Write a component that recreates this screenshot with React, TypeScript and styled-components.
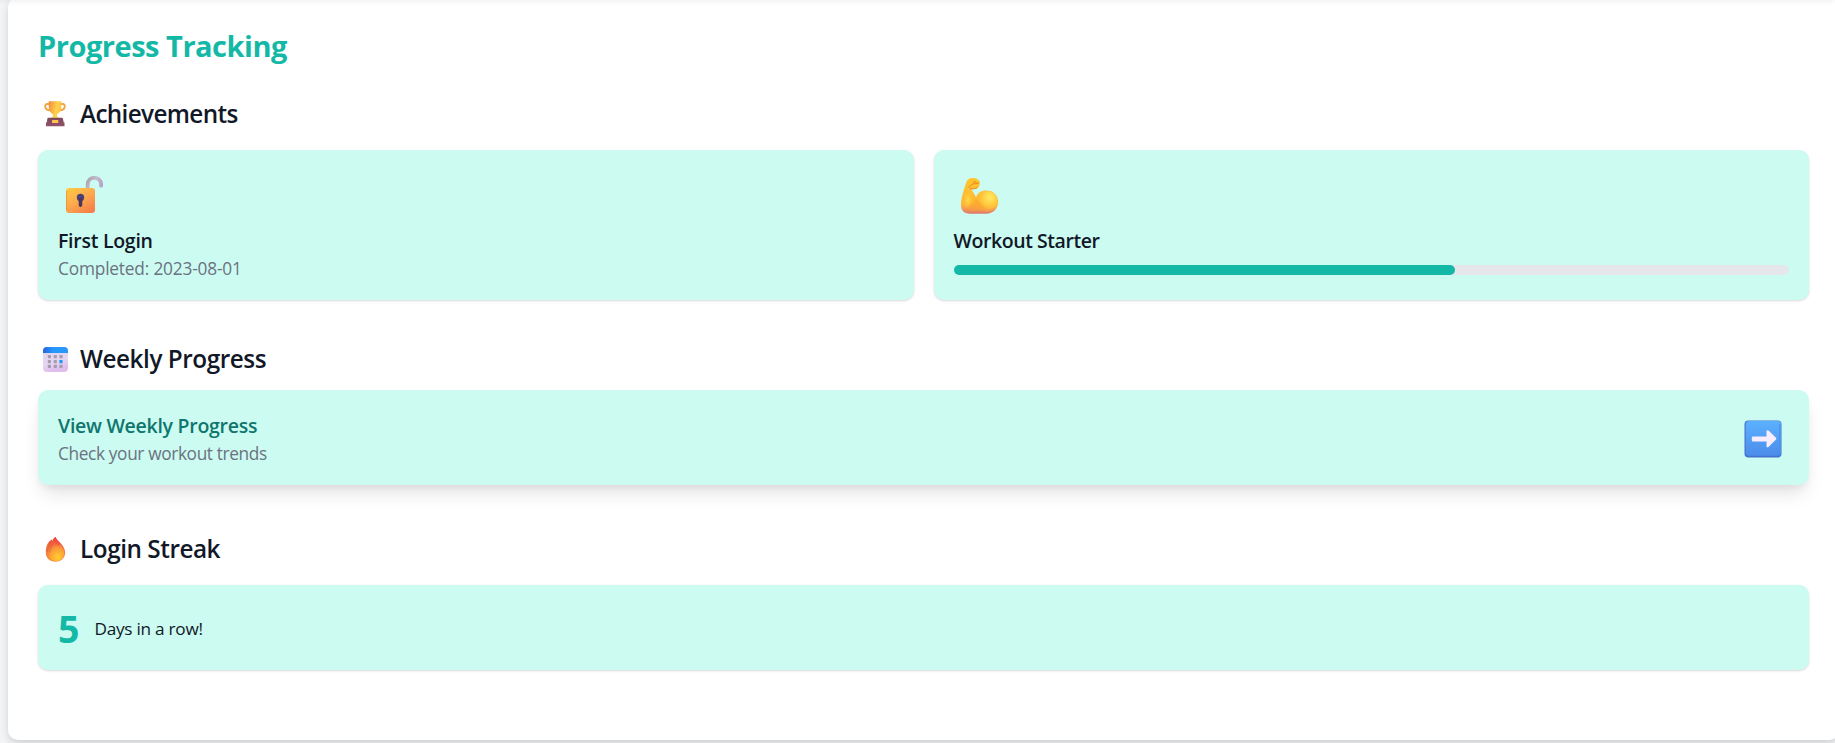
import React from 'react';
import styled, { createGlobalStyle } from 'styled-components';

const GlobalStyle = createGlobalStyle`
  * { box-sizing: border-box; }
  body {
    margin: 0;
    background: #f3f4f6;
    color: #111827;
    font-family: 'Segoe UI', 'Open Sans', 'Noto Sans', sans-serif;
    overflow: hidden;
  }
  h1, h2, h3, p { margin: 0; white-space: nowrap; }
`;

const Page = styled.div`
  height: 743px;
  padding-left: 8px;
  overflow: hidden;
  position: relative;
`;

const HeaderShadow = styled.div`
  position: absolute;
  left: 0;
  right: 0;
  top: -10px;
  height: 10px;
  box-shadow: 0 1px 6px rgba(0, 0, 0, 0.07);
`;

const Panel = styled.main`
  width: 1831px;
  height: 743px;
  margin-top: -3px;
  padding: 29px 30px 0;
  background: #fff;
  border-radius: 10px;
  box-shadow: 0 5px 8px -1px rgba(0, 0, 0, 0.1), 0 2px 10px rgba(0, 0, 0, 0.06);
`;

const Title = styled.h1`
  height: 40px;
  margin-bottom: 30px;
  font-size: 29px;
  line-height: 40px;
  font-weight: 700;
  letter-spacing: -0.48px;
  color: #14b8a6;
`;

const Section = styled.section<{ $after: number }>`
  margin-bottom: ${(p) => p.$after}px;
`;

const SectionHeading = styled.h2<{ $gap?: number; $track?: number }>`
  display: flex;
  align-items: center;
  gap: 10px;
  height: 34px;
  margin-bottom: ${(p) => p.$gap ?? 20}px;
  padding: 2px 0 0 1px;
  font-size: 24.3px;
  line-height: 34px;
  font-weight: 600;
  letter-spacing: ${(p) => p.$track ?? -0.45}px;

  svg { margin-top: -2px; }
`;

const Grid = styled.div`
  display: grid;
  grid-template-columns: 1fr 1fr;
  gap: 20px;
`;

const Card = styled.div`
  padding: 20px;
  background: #ccfbf1;
  border-radius: 10px;
  box-shadow: 0 1px 3px rgba(0, 0, 0, 0.1), 0 1px 2px rgba(0, 0, 0, 0.06);
`;

const AchievementCard = styled(Card)`
  height: 150px;
`;

const LinkCard = styled(Card)`
  display: flex;
  align-items: center;
  justify-content: space-between;
  height: 95px;
  padding-top: 23px;
  box-shadow: 0 12px 19px -4px rgba(0, 0, 0, 0.11), 0 5px 8px -3px rgba(0, 0, 0, 0.07);
`;

const StreakCard = styled(Card)`
  display: flex;
  align-items: center;
  height: 85px;
  padding-top: 22px;
`;

const CardIcon = styled.div<{ $inset?: number }>`
  height: 58px;
  padding: 4px 0 0 ${(p) => p.$inset ?? 6}px;
`;

const ArrowIcon = styled.div`
  display: flex;
  margin-right: 7px;
`;

const CardTitle = styled.h3<{ $link?: boolean; $track?: number }>`
  font-size: 19.5px;
  line-height: 25px;
  font-weight: 600;
  letter-spacing: ${(p) => p.$track ?? -0.27}px;
  color: ${(p) => (p.$link ? '#0f766e' : '#111827')};
`;

const Note = styled.p<{ $track?: number }>`
  margin-top: 3px;
  font-size: 17.300px;
  line-height: 25px;
  letter-spacing: ${(p) => p.$track ?? -0.37}px;
  color: #6b7280;
`;

const Track = styled.div`
  height: 10px;
  margin-top: 12px;
  border-radius: 5px;
  background: #e5e7eb;
`;

const Fill = styled.div`
  height: 100%;
  border-radius: 5px;
  background: #14b8a6;
`;

const StreakCount = styled.span`
  width: 36.500px;
  font-size: 37.5px;
  line-height: 45px;
  font-weight: 700;
  color: #14b8a6;
`;

const StreakText = styled.span`
  font-size: 17.2px;
  line-height: 25px;
  letter-spacing: -0.26px;
`;

const Trophy = () => (
  <svg width="31" height="31" viewBox="0 0 31 31">
    <defs>
      <linearGradient id="cup" x1="0" x2="1" y1="0" y2="0.3">
        <stop offset="0" stopColor="#f0893a" />
        <stop offset="0.7" stopColor="#ffd24d" />
        <stop offset="1" stopColor="#ffc247" />
      </linearGradient>
      <linearGradient id="base" x1="0" x2="0" y1="0" y2="1">
        <stop offset="0" stopColor="#7d4a5c" />
        <stop offset="1" stopColor="#93506c" />
      </linearGradient>
    </defs>
    <path d="M10.500 6H8.300C5 6 5.300 12.400 11.300 12.200M21.500 6h2.200c3.300 0 3 6.400-3 6.200" fill="none" stroke="#f2a545" strokeWidth="1.900" />
    <path d="M9.700 3.200h12.600v5.300c0 4-2 6.800-4.400 7.700l.5 3 2.400.8h-9.600l2.400-.8.5-3C11.700 15.300 9.700 12.500 9.700 8.500z" fill="url(#cup)" />
    <path d="M9.300 19.800h13.600q.8 0 1 .8l.8 3.900h.8v3.700H7v-3.700h.8l.6-3.900q.1-.8.9-.8z" fill="url(#base)" />
    <rect x="13" y="22" width="6.300" height="3" rx=".5" fill="#ffc34d" />
  </svg>
);

const Calendar = () => (
  <svg width="31" height="31" viewBox="0 0 31 31">
    <defs>
      <linearGradient id="calTop" x1="0" x2="1" y1="0" y2="0">
        <stop offset="0" stopColor="#2a62dc" />
        <stop offset="0.4" stopColor="#2597fb" />
        <stop offset="1" stopColor="#2b98f5" />
      </linearGradient>
      <linearGradient id="calBody" x1="0" x2="0.3" y1="0" y2="1">
        <stop offset="0" stopColor="#ded8ea" />
        <stop offset="0.7" stopColor="#e4d5f0" />
        <stop offset="1" stopColor="#dfbdec" />
      </linearGradient>
    </defs>
    <rect x="4" y="4" width="25" height="25" rx="4" fill="url(#calBody)" />
    <path d="M4 10V8a4 4 0 0 1 4-4h17a4 4 0 0 1 4 4v2z" fill="url(#calTop)" />
    {[12, 17, 21.700].map((y) =>
      [8.800, 14.700, 20.400].map((x) => (
        <rect
          key={`${x}-${y}`}
          x={x}
          y={y}
          width="3.200"
          height="3.200"
          rx=".6"
          fill={x > 19 && y === 17 ? '#2196f3' : '#a79bb4'}
        />
      )),
    )}
  </svg>
);

const Fire = () => (
  <svg width="31" height="31" viewBox="0 0 31 31">
    <defs>
      <linearGradient id="flame" x1="0.6" x2="0.4" y1="0" y2="1">
        <stop offset="0" stopColor="#f03f3f" />
        <stop offset="0.5" stopColor="#f5713f" />
        <stop offset="1" stopColor="#f58a3c" />
      </linearGradient>
      <radialGradient id="glow" cx="0.6" cy="0.8" r="0.7">
        <stop offset="0" stopColor="#ffcf2e" />
        <stop offset="0.6" stopColor="#fda335" />
        <stop offset="1" stopColor="#f77b3d" />
      </radialGradient>
    </defs>
    <g transform="translate(.8 .8)">
      <path d="M15.800 3c1 4.200 9.500 8 9.500 15.800 0 5.300-4 9.200-9.600 9.200-5.800 0-9.700-3.800-9.700-9.200 0-5.500 1.200-10.300 6.300-13.300-.3.900-.2 1.600 0 2.200C12.900 5.700 13.800 4 15.800 3z" fill="url(#flame)" />
      <path d="M20.300 10.500c2.700 2.500 4.200 5 4.200 8.500 0 4.800-3.200 8.300-8.300 8.300-4.800 0-8.200-2.800-8.200-6.800 0-5.500 5-7 6.500-12 1 1.300 1.300 2.500 1.200 4 .9-.9 1.400-1.700 1.600-2.500.8.8 1 1.800 1.100 2.700.9-.6 1.600-1.300 1.900-2.200z" fill="url(#glow)" />
      <path d="M11.500 6.500c-.5 4.500-4 6.500-4 11.500M14.300 8.500c-.7 4.500-4.100 6-4.700 10" fill="none" stroke="#c9572e" strokeWidth=".7" opacity=".7" />
    </g>
  </svg>
);

const Unlock = () => (
  <svg width="44" height="44" viewBox="0 0 44 44">
    <defs>
      <linearGradient id="lockBody" x1="0.1" x2="0.8" y1="0" y2="1">
        <stop offset="0" stopColor="#ffc842" />
        <stop offset="0.5" stopColor="#fda94e" />
        <stop offset="1" stopColor="#f57d48" />
      </linearGradient>
      <linearGradient id="shackle" x1="0" x2="1" y1="0" y2="0.6">
        <stop offset="0" stopColor="#a9a0ad" />
        <stop offset="0.5" stopColor="#c3bccb" />
        <stop offset="1" stopColor="#bc9fc9" />
      </linearGradient>
    </defs>
    <path d="M23.700 16v-5.500c0-8.800 13.400-8.800 13.400-.3v1.500" fill="none" stroke="url(#shackle)" strokeWidth="3.800" strokeLinecap="round" />
    <rect x="2" y="14" width="29" height="25" rx="3" fill="url(#lockBody)" />
    <path d="M2.600 17v19" stroke="#e98a38" strokeWidth="1" opacity=".7" />
    <circle cx="16.500" cy="23.500" r="3.700" fill="#4a4176" />
    <path d="M14.500 24h4l-.3 7.500q-1.700 3-3.400 0z" fill="#493659" />
  </svg>
);

const Biceps = () => (
  <svg width="44" height="44" viewBox="0 0 44 44">
    <defs>
      <linearGradient id="arm" x1="0" x2="0" y1="0" y2="1">
        <stop offset="0" stopColor="#ffc52f" />
        <stop offset="0.72" stopColor="#ffb936" />
        <stop offset="0.86" stopColor="#f59a56" />
        <stop offset="1" stopColor="#dc786c" />
      </linearGradient>
      <radialGradient id="muscle" cx="0.64" cy="0.3" r="0.65">
        <stop offset="0" stopColor="#ffec60" />
        <stop offset="0.7" stopColor="#ffc23a" />
        <stop offset="1" stopColor="#ffae35" stopOpacity="0.4" />
      </radialGradient>
      <radialGradient id="forearm" cx="0.5" cy="0.5" r="0.5">
        <stop offset="0" stopColor="#ffdc4d" />
        <stop offset="1" stopColor="#ffc030" stopOpacity="0" />
      </radialGradient>
    </defs>
    <path d="M7.500 7.500C8.500 5 11 4 13.500 4c4.500 0 7.400 2 7.300 5.500-.1 3.300-2 5.500-4.500 5.300l-4 .3 4.700 8c1.500-4 5-6.600 10.200-6.600 6.800 0 12 4.800 12 11.200 0 7-5.200 12-12 12H10.500C5.500 39.700 2 36.500 2 31.500c0-9 3.200-16.500 5.500-24z" fill="url(#arm)" />
    <ellipse cx="9" cy="26" rx="5" ry="10" fill="url(#forearm)" />
    <circle cx="28" cy="27.500" r="10.500" fill="url(#muscle)" />
    <path d="M17 24.500 26 34l-3 3H11l-3-2.500z" fill="#f9a22b" opacity=".5" />
    <path d="M9.500 13.500c2-1.500 3.500-4 6-3.800 2 .2 3.600-.2 4.900-1.500M14 8.500c1.500-1.300 3-.8 3.500.5M11 14.500c2.500.7 5 .5 7-1" fill="none" stroke="#e9851f" strokeWidth="1" />
  </svg>
);

const Arrow = () => (
  <svg width="38" height="38" viewBox="0 0 38 38">
    <defs>
      <linearGradient id="tile" x1="0" x2="0" y1="0" y2="1">
        <stop offset="0" stopColor="#5bb1ff" />
        <stop offset="1" stopColor="#4c8cea" />
      </linearGradient>
    </defs>
    <rect x=".5" y=".5" width="37" height="37" rx="4" fill="#4274cf" />
    <rect x="1.700" y="1" width="35.300" height="34.800" rx="3.500" fill="url(#tile)" />
    <path d="M35.800 4v29" stroke="#4b91e8" strokeWidth="1.300" />
    <path d="M9 16.500h13.500v-5q0-2 2-1l7.500 7.300q.8.800 0 1.600L24.500 27q-2 1.200-2-1v-4.500H9q-1.200 0-1.200-1.200v-2.600q0-1.200 1.200-1.200z" fill="#f7edff" />
  </svg>
);

export default function App() {
  return (
    <>
      <GlobalStyle />
      <Page>
        <Panel>
          <Title>Progress Tracking</Title>
          <Section $after={41}>
            <SectionHeading $track={-0.65}><Trophy />Achievements</SectionHeading>
            <Grid>
              <AchievementCard>
                <CardIcon><Unlock /></CardIcon>
                <CardTitle>First Login</CardTitle>
                <Note $track={-0.18}>Completed: 2023-08-01</Note>
              </AchievementCard>
              <AchievementCard>
                <CardIcon $inset={5}><Biceps /></CardIcon>
                <CardTitle $track={-0.43}>Workout Starter</CardTitle>
                <Track><Fill style={{ width: '60%' }} /></Track>
              </AchievementCard>
            </Grid>
          </Section>
          <Section $after={46}>
            <SectionHeading $gap={15}><Calendar />Weekly Progress</SectionHeading>
            <LinkCard>
              <div>
                <CardTitle $link>View Weekly Progress</CardTitle>
                <Note>Check your workout trends</Note>
              </div>
              <ArrowIcon><Arrow /></ArrowIcon>
            </LinkCard>
          </Section>
          <Section $after={70}>
            <SectionHeading><Fire />Login Streak</SectionHeading>
            <StreakCard>
              <StreakCount>5</StreakCount>
              <StreakText>Days in a row!</StreakText>
            </StreakCard>
          </Section>
        </Panel>
        <HeaderShadow />
      </Page>
    </>
  );
}
